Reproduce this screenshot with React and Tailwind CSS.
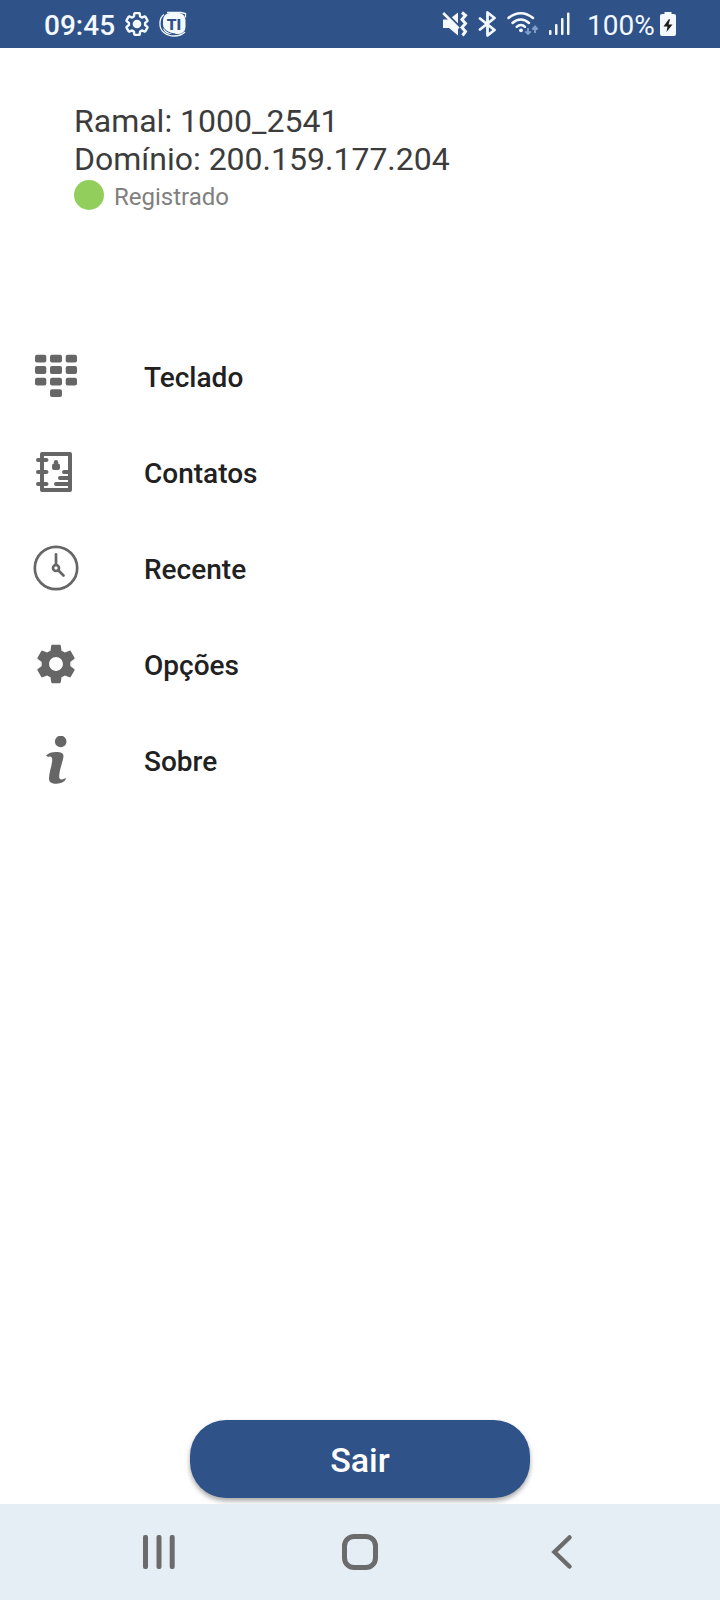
import React from 'react';

const menuItems = [
  { label: 'Teclado', Icon: KeypadIcon },
  { label: 'Contatos', Icon: ContactsIcon },
  { label: 'Recente', Icon: ClockIcon },
  { label: 'Opções', Icon: GearIcon },
  { label: 'Sobre', Icon: InfoIcon },
];

const GEAR_PATH =
  'M19.43 12.98c.04-.32.07-.64.07-.98s-.03-.66-.07-.98l2.11-1.65c.19-.15.24-.42.12-.64l-2-3.46c-.12-.22-.39-.3-.61-.22l-2.49 1c-.52-.4-1.08-.73-1.69-.98l-.38-2.65C14.46 2.18 14.25 2 14 2h-4c-.25 0-.46.18-.49.42l-.38 2.65c-.61.25-1.17.59-1.69.98l-2.49-1c-.23-.09-.49 0-.61.22l-2 3.46c-.13.22-.07.49.12.64l2.11 1.65c-.04.32-.07.65-.07.98s.03.66.07.98l-2.11 1.65c-.19.15-.24.42-.12.64l2 3.46c.12.22.39.3.61.22l2.49-1c.52.4 1.08.73 1.69.98l.38 2.65c.03.24.24.42.49.42h4c.25 0 .46-.18.49-.42l.38-2.65c.61-.25 1.17-.59 1.69-.98l2.49 1c.23.09.49 0 .61-.22l2-3.46c.12-.22.07-.49-.12-.64l-2.11-1.65z';

function App() {
  return (
    <div className="flex h-[1600px] w-[720px] flex-col bg-white font-['Roboto',sans-serif]">
      <StatusBar />
      <main className="flex flex-1 flex-col">
        <Account />
        <nav className="mt-[114px] flex flex-col">
          {menuItems.map(({ label, Icon }) => (
            <button key={label} className="flex h-24 items-center gap-16 px-8">
              <Icon />
              <span className="pt-1 text-[28px] leading-8 font-medium text-[#212121]">{label}</span>
            </button>
          ))}
        </nav>
        <button className="mx-auto mt-auto mb-1.5 h-[78px] w-[340px] rounded-[36px] bg-[#2f5288] pt-0.5 text-[34px] leading-10 font-medium text-white shadow-[0_3px_5px_rgba(0,0,0,0.35)]">
          Sair
        </button>
      </main>
      <SystemNav />
    </div>
  );
}

function Account() {
  return (
    <header className="pt-[54px] pl-[74px] text-[#3c3c3c]">
      <p className="text-[32px] leading-[38px]">Ramal: 1000_2541</p>
      <p className="text-[32px] leading-[38px]">Domínio: 200.159.177.204</p>
      <div className="mt-0.5 flex h-[34px] items-center gap-2.5">
        <span className="mb-1 size-[30px] rounded-full bg-[#92ce5c]" />
        <span className="text-2xl leading-[34px] text-[#808080]">Registrado</span>
      </div>
    </header>
  );
}

function StatusBar() {
  return (
    <div className="flex h-12 shrink-0 items-center bg-[#2f5288] pr-11 pl-11 text-[28px] leading-8 font-medium text-[#f4f8ff]">
      <span className="w-20 pt-[3px]">09:45</span>
      <svg width="26" height="26" viewBox="0 0 24 24" fill="none">
        <path d={GEAR_PATH} stroke="currentColor" strokeWidth="2.2" strokeLinejoin="round" />
        <circle cx="12" cy="12" r="4" fill="currentColor" />
      </svg>
      <svg className="ml-[9px]" width="28" height="26" viewBox="0 0 28 26" fill="none">
        <rect x="4" y="2" width="22.500" height="21" rx="7" fill="currentColor" />
        <path d="M5 3.500C1 6 .8 10 1 14c.3 6 6 11 14 11 5 0 9-2 11-4M8 1.500h14l4.500 1v4" stroke="currentColor" strokeWidth="1.300" />
        <path d="M3.500 14c.5 4.500 6 8.500 13 9" stroke="#2f5288" strokeWidth="1" />
        <text x="15" y="18.500" textAnchor="middle" fontSize="15.500" fontWeight="900" fill="#2f5288">TI</text>
      </svg>
      <div className="ml-auto flex items-center">
        <svg width="26" height="26" viewBox="0 0 26 26" fill="none">
          <path d="M1 8.500h6l9-7v23l-9-7.500H1z" fill="currentColor" />
          <path d="M1 -.5l18 18" stroke="#2f5288" strokeWidth="3" />
          <path d="M1.200 2l15.500 15.500" stroke="currentColor" strokeWidth="2.600" />
          <path d="M20 1.500l3.500 3-3.500 4 3.500 4-3.500 4 3.500 4-3 4" stroke="currentColor" strokeWidth="3" />
        </svg>
        <svg className="ml-2.5" width="20" height="26" viewBox="0 0 20 26" fill="none">
          <path d="M2 7.500l14.500 11.500-7 5.500v-23l7 5.500L2 18.500" stroke="currentColor" strokeWidth="2.800" strokeLinejoin="round" strokeLinecap="round" />
        </svg>
        <svg className="ml-[9px]" width="34" height="26" viewBox="0 0 34 26" fill="none">
          <g stroke="currentColor" strokeWidth="2.500" strokeLinecap="round">
            <path d="M1.500 7C9 .5 18.500.5 26 7" />
            <path d="M5.500 12c5-4.800 11.500-4.800 16.500 0" />
            <path d="M9.700 15.800c2.500-2.300 6-2.300 8.300 0" />
          </g>
          <circle cx="14" cy="19.300" r="1.900" fill="currentColor" />
          <path d="M21 17v6m-2.700-2.700l2.700 2.700 2.700-2.700M28 22v-6.500m-2.700 3l2.700-3 2.700 3" stroke="#7f9cca" strokeWidth="1.900" />
        </svg>
        <svg className="ml-[7px]" width="24" height="26" viewBox="0 0 24 26" fill="currentColor">
          <rect x="1" y="19" width="2.500" height="5" rx="1" />
          <rect x="7" y="13" width="2.500" height="11" rx="1" />
          <rect x="13" y="7" width="2.500" height="17" rx="1" />
          <rect x="19" y="1.500" width="2.500" height="22.500" rx="1" />
        </svg>
        <span className="ml-[15px] w-[73px] pt-[3px] font-normal">100%</span>
        <svg width="16" height="26" viewBox="0 0 16 26">
          <path d="M4.500 1h7v2H14a2 2 0 0 1 2 2v18a2 2 0 0 1-2 2H2a2 2 0 0 1-2-2V5a2 2 0 0 1 2-2h2.500z" fill="currentColor" />
          <path d="M9 8l-5.500 7.500h4L6.500 21l6-7.500h-4l1.500-5z" fill="#1c1c1c" />
        </svg>
      </div>
    </div>
  );
}

function KeypadIcon() {
  return (
    <svg className="size-12 text-[#666666]" viewBox="0 0 48 48" fill="currentColor">
      {[2.7, 14.1, 25.7].map((y) => (
        <g key={y}>
          <rect x="3" y={y} width="11.300" height="7.800" rx="2" />
          <rect x="18" y={y} width="12" height="7.800" rx="2" />
          <rect x="33.700" y={y} width="11.300" height="7.800" rx="2" />
        </g>
      ))}
      <rect x="18" y="37.300" width="12" height="7.700" rx="2" />
    </svg>
  );
}

function ContactsIcon() {
  return (
    <svg className="size-12 text-[#666666]" viewBox="0 0 48 48" fill="none" stroke="currentColor" strokeWidth="4">
      <rect x="10" y="6" width="28" height="36" strokeLinejoin="round" />
      <path d="M6 12h8.500M6 24h8.500M6 36h8.500M32 24h6M28 30h10M24 36h14" strokeLinecap="round" />
      <circle cx="24" cy="14.200" r="2.200" fill="currentColor" stroke="none" />
      <path d="M22 15.500h4a2 2 0 0 1 2 2V20a2 2 0 0 1-2 2h-4a2 2 0 0 1-2-2v-2.500a2 2 0 0 1 2-2z" fill="currentColor" stroke="none" />
    </svg>
  );
}

function ClockIcon() {
  return (
    <svg className="size-12 text-[#666666]" viewBox="0 0 48 48" fill="none" stroke="currentColor" strokeWidth="2.700" strokeLinecap="round">
      <circle cx="24" cy="24" r="21.200" />
      <circle cx="24" cy="24" r="3" />
      <path d="M24 10.300V21M26.500 26.500l5 5" />
    </svg>
  );
}

function GearIcon() {
  return (
    <svg className="size-12 p-px text-[#666666]" viewBox="0 0 24 24" fill="currentColor">
      <path fillRule="evenodd" d={`${GEAR_PATH}M12 15.600c-1.980 0-3.600-1.620-3.600-3.600s1.620-3.600 3.600-3.600 3.600 1.620 3.600 3.600-1.620 3.600-3.600 3.600z`} />
    </svg>
  );
}

function InfoIcon() {
  return (
    <svg className="size-12 text-[#666666]" viewBox="0 0 48 48" fill="currentColor">
      <circle cx="28.700" cy="5.500" r="5.800" />
      <path d="M14 19.500c2.500-2.500 6-3.600 10-3.600 5.500 0 8 1.600 7.400 5.100-.6 4.500-3.700 12-4.200 18.500-.2 3 .8 4.200 2.800 4 1.500-.1 2.200-1.200 4-1.200-.5 3.200-5 5.400-9.500 5.400-5 0-7.500-1.300-7.500-5.200 0-6 2.600-11.500 3.200-17.800.3-3.500-1.400-4.800-2.900-4-1.100.4-2.300-.3-3.300-1.200z" />
    </svg>
  );
}

function SystemNav() {
  return (
    <footer className="flex h-24 shrink-0 items-center justify-between bg-[#e6eef5] px-[142px] text-[#6b6b6b]">
      <svg width="36" height="36" viewBox="0 0 36 36" fill="currentColor">
        <rect x="1" y="1" width="5" height="34" rx="2" />
        <rect x="14.500" y="1" width="5" height="34" rx="2" />
        <rect x="27.700" y="1" width="5" height="34" rx="2" />
      </svg>
      <div className="size-9 rounded-xl border-[5px] border-[#6b6b6b]" />
      <svg width="36" height="36" viewBox="0 0 36 36" fill="none" stroke="currentColor" strokeWidth="4.500" strokeLinecap="round" strokeLinejoin="miter">
        <path d="M27.500 3.500L12.500 18l15 14.500" />
      </svg>
    </footer>
  );
}

export default App;
